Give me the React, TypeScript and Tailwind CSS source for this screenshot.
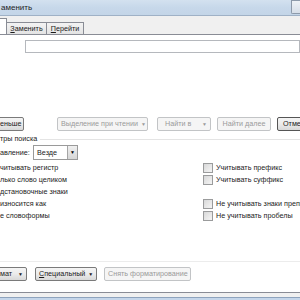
import React from "react";

const font = { fontFamily: '"Liberation Sans", Arial, sans-serif' };

function Btn({ children, className = "", disabled = false, arrow = false }: { children: React.ReactNode; className?: string; disabled?: boolean; arrow?: boolean }) {
  return (
    <div
      className={
        "flex h-[14px] shrink-0 items-center overflow-hidden rounded-[2px] border px-[3px] text-[7.2px] leading-none " +
        (disabled
          ? "border-[#c2c4c6] bg-[#f5f5f5] text-[#9a9a9a] "
          : "border-[#7a7a7a] bg-gradient-to-b from-[#f4f4f4] via-[#ebebeb] to-[#d8d8d8] text-[#1a1a1a] ") +
        className
      }
    >
      <span className="flex-1 whitespace-nowrap">{children}</span>
      {arrow && <span className="ml-[3px] text-[5px]">▼</span>}
    </div>
  );
}

function Check({ label }: { label: string }) {
  return (
    <div className="flex h-[12px] items-center gap-[3px]">
      <div className="h-[10px] w-[10px] shrink-0 border border-[#9a9b9c] bg-gradient-to-br from-[#d6d7d8] to-[#f4f4f4] p-[1px]">
        <div className="h-full w-full bg-gradient-to-br from-[#dcdcdc] to-[#f2f2f2]" />
      </div>
      <span className="whitespace-nowrap text-[7.2px] leading-none text-[#222]">{label}</span>
    </div>
  );
}

export default function App() {
  return (
    <div className="relative h-[300px] w-[300px] overflow-hidden bg-[#f0f0f0]" style={font}>
      {/* title bar */}
      <div className="flex h-[16px] items-center justify-between border-b border-[#9fb1c6] bg-gradient-to-b from-[#d3e1ef] via-[#c7d8ea] to-[#c3d5e8]">
        <span className="pl-[1px] text-[8px] leading-none text-[#1e1e1e]">аменить</span>
        <div className="h-[14px] w-[9px] self-start rounded-bl-[2px] border border-r-0 border-[#8d9aaa] bg-gradient-to-b from-[#eef2f6] to-[#d6dee8]" />
      </div>

      {/* tab strip */}
      <div className="flex h-[18px] items-end">
        <div className="h-[16px] w-[7px] shrink-0 border-r border-t border-[#898c95] bg-white" />
        <div className="flex h-[12px] w-[40px] shrink-0 items-center justify-center border-r border-t border-[#898c95] bg-gradient-to-b from-[#f3f3f3] to-[#e3e3e3] text-[7.2px] leading-none text-[#1a1a1a]">
          <span>
            <span className="underline">З</span>аменить
          </span>
        </div>
        <div className="flex h-[12px] w-[37px] shrink-0 items-center justify-center border-r border-t border-[#898c95] bg-gradient-to-b from-[#f3f3f3] to-[#e3e3e3] text-[7.2px] leading-none text-[#1a1a1a]">
          <span>
            <span className="underline">П</span>ерейти
          </span>
        </div>
      </div>

      {/* tab page */}
      <div className="flex h-[259px] flex-col border-b border-t border-[#898c95] bg-white">
        <div className="ml-[25px] mt-[5px] h-[13px] border border-[#b5b8bd] bg-white" />

        {/* button row */}
        <div className="mt-[64px] flex h-[14px] items-center">
          <Btn className="-ml-[4px] w-[28px]">еньше</Btn>
          <Btn disabled arrow className="ml-[33px] w-[91px]">
            Выделение при чтении
          </Btn>
          <Btn disabled arrow className="ml-[9px] w-[54px] pl-[7px]">
            Найти в
          </Btn>
          <Btn disabled className="ml-[6px] w-[54px] text-center">
            Найти далее
          </Btn>
          <Btn className="ml-[6px] w-[40px] border-[#555] from-[#e9e9e9] via-[#dcdcdc] to-[#c8c8c8] pl-[5px]">Отмена</Btn>
        </div>

        {/* section label */}
        <div className="mt-[3px] flex h-[10px] items-center gap-[3px]">
          <span className="text-[7.2px] leading-none text-[#222]">тры поиска</span>
          <div className="h-px flex-1 bg-[#e4e4e4]" />
        </div>

        {/* direction */}
        <div className="mt-[1px] flex h-[15px] items-center">
          <span className="w-[33px] shrink-0 text-[7.2px] leading-none text-[#222]">авление:</span>
          <div className="flex h-[15px] w-[45px] shrink-0 items-center border border-[#9a9a9a] bg-white">
            <span className="flex-1 pl-[3px] text-[7.2px] leading-none text-[#222]">Везде</span>
            <div className="flex h-full w-[10px] items-center justify-center border-l border-[#a5a5a5] bg-gradient-to-b from-[#f0f0f0] to-[#d6d6d6] text-[5px] leading-none text-black">
              ▼
            </div>
          </div>
        </div>

        {/* checkbox grid */}
        <div className="mt-[2px] grid grid-cols-[203px_1fr]">
          <div className="flex flex-col">
            {["читывать регистр", "лько слово целиком", "дстановочные знаки", "износится как", "е словоформы"].map((t) => (
              <div key={t} className="flex h-[12px] items-center whitespace-nowrap text-[7.2px] leading-none text-[#222]">
                {t}
              </div>
            ))}
          </div>
          <div className="flex min-w-0 flex-col">
            <Check label="Учитывать префикс" />
            <Check label="Учитывать суффикс" />
            <div className="h-[12px]" />
            <Check label="Не учитывать знаки препи" />
            <Check label="Не учитывать пробелы" />
          </div>
        </div>

        {/* separator */}
        <div className="mt-[39px] h-px bg-[#ececec]" />

        {/* bottom buttons */}
        <div className="mt-[5px] flex h-[14px] items-center">
          <Btn arrow className="-ml-[4px] w-[31px]">мат</Btn>
          <Btn arrow className="ml-[8px] w-[62px]">
            <span className="underline">С</span>пециальный
          </Btn>
          <Btn disabled className="ml-[7px] w-[87px]">
            Снять форматирование
          </Btn>
        </div>
      </div>

      {/* frame bottom */}
      <div className="h-[4px] bg-[#f0f0f0]" />
      <div className="h-[3px] border-t border-[#8ea3bd] bg-[#c5d6ea]" />
    </div>
  );
}
